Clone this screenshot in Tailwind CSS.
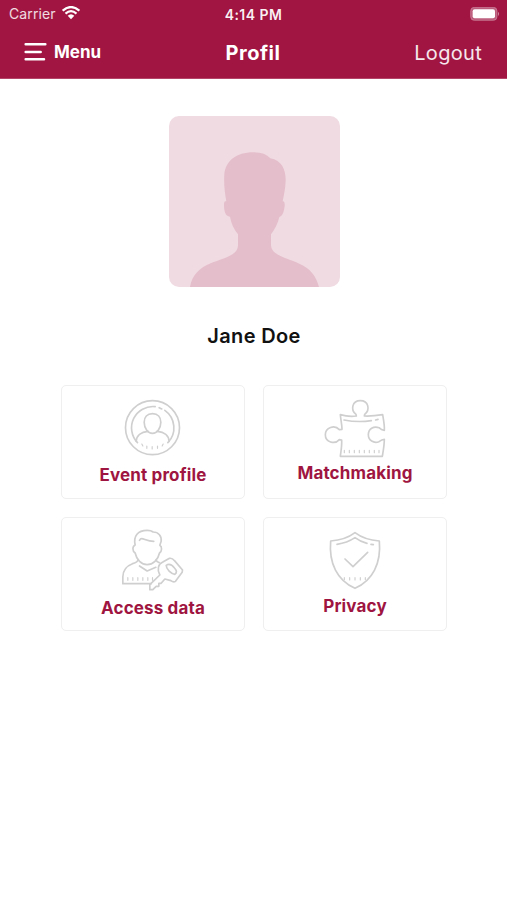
<!DOCTYPE html>
<html lang="en">

<head>
  <meta charset="UTF-8" />
  <meta name="viewport" content="width=device-width, initial-scale=1.0" />
  <title>Profil</title>
  <script src="https://cdn.jsdelivr.net/npm/@tailwindcss/browser@4"></script>
</head>

<body class="bg-white min-h-screen flex flex-col font-['Inter',sans-serif]">
  <header class="bg-[#a01541] h-[79px] text-white border-b border-[#b44468]">
    <!-- Status bar -->
    <div class="h-7 pl-[9px] pr-[7px] grid grid-cols-3 items-center text-[14px] leading-none">
      <div class="flex items-center gap-[6px] text-white/85">
        <span class="tracking-[0.1px]">Carrier</span>
        <svg class="w-[18px] h-[14px] -mt-[2px]" viewBox="0 0 54 42" fill="none" stroke="#fff" stroke-width="6.5">
          <path d="M2 14 Q27 -8 52 14" />
          <path d="M10.500 23 Q27 8 43.500 23" />
          <path d="M17 29 Q27 20 37 29 L27 40 Z" fill="#fff" stroke="none" />
        </svg>
      </div>
      <div class="-ml-[2px] pt-[1px] text-center font-semibold text-[14px] text-white/95 tracking-[0.45px]">4:14 PM</div>
      <svg class="w-[30px] h-[14px] -mt-[1px] justify-self-end" viewBox="0 0 90 42">
        <rect x="2" y="1" width="79" height="39" rx="11" fill="#bd5d7d" stroke="#cf8ba2" stroke-width="2" />
        <rect x="8" y="7" width="67" height="27" rx="6" fill="#fff" />
        <path d="M84 14 Q90 20 84 27 Z" fill="#cf8ba2" />
      </svg>
    </div>

    <!-- Nav bar -->
    <nav class="h-[49px] pl-6 pr-[25px] grid grid-cols-3 items-center">
      <a href="#" class="flex items-center gap-[7px] font-bold text-[17px]">
        <svg class="w-[23px] h-[20px] -mt-[1px]" viewBox="0 0 69 60" fill="none" stroke="#fff" stroke-width="7.500" stroke-linecap="round">
          <path d="M5 7H64M5 30H50M5 52H60" />
        </svg>
        <span>Menu</span>
      </a>
      <h1 class="text-center font-bold text-[20px] tracking-[0.5px]">Profil</h1>
      <a href="#" class="text-right text-[20px] text-white/90 tracking-[0.3px]">Logout</a>
    </nav>
  </header>

  <main class="flex flex-col items-center pt-[37px] pl-px">
    <!-- Avatar -->
    <svg class="w-[171px] h-[171px] rounded-[10px] bg-[#f0dbe2]" viewBox="25 33 513 513">
      <path fill="#e4becb" d="M88 546 C94 510 118 488 150 475 C190 458 232 452 232 420 V388 C220 374 211 354 208 335 C194 334 190 318 190 300 C190 290 192 287 197 289 C192 262 189 235 191 208 C195 168 226 142 278 142 C302 142 318 148 329 160 C364 166 376 196 375 228 C374 250 370 270 366 289 C373 288 373 300 371 310 C368 326 364 334 356 336 C352 354 343 372 331 388 V420 C331 450 376 458 416 476 C450 490 468 516 475 546 Z" />
    </svg>

    <h2 class="mt-[34px] text-[20px] leading-[30px] font-semibold text-[#111] tracking-[0.35px]">Jane Doe</h2>

    <div class="mt-[34px] grid grid-cols-2 gap-[18px]">
      <a href="#" class="w-[184px] h-[114px] rounded-[5px] border border-[#efefef] flex flex-col items-center pt-[4px]">
        <svg class="w-[80px] h-[75px] shrink-0" viewBox="-4.500 0 240 225" fill="none" stroke="#cfcfcf" stroke-width="5" stroke-linecap="round" stroke-linejoin="round">
          <circle cx="114" cy="113" r="81" />
          <path d="M69 158 A64 64 0 0 1 122 50M134 53L142 57M151 61A64 64 0 0 1 160 158" />
          <path d="M114 71C98 71 89 82 89 97C89 114 100 130 114 130C128 130 139 114 139 97C139 82 130 71 114 71Z" />
          <path d="M65 154C66 137 80 126 100 124M129 124C149 126 163 137 164 154" />
          <path stroke-width="3.500" d="M82 162L85 168M97 168V175M113 170V177M129 168V175M146 162L143 168" />
        </svg>
        <span class="text-[17px] leading-5 font-bold text-[#9f1541] tracking-[0.15px]">Event profile</span>
      </a>

      <a href="#" class="w-[184px] h-[114px] rounded-[5px] border border-[#efefef] flex flex-col items-center pt-[4px]">
        <svg class="w-[80px] h-[75px] shrink-0" viewBox="0 0 240 225" fill="none" stroke="#cfcfcf" stroke-width="5" stroke-linecap="round" stroke-linejoin="round">
          <path d="M76 74C90 78 108 80 124 78L123 73C106 60 111 32 136 32C161 32 166 60 149 73L148 78C166 79 184 77 203 74C206 91 209 106 208 121C200 120 196 117 192 113C176 107 160 117 160 134C160 151 176 161 192 155C197 151 201 148 208 148C208 166 205 182 202 199H76C78 183 81 167 80 150L73 149C59 165 31 156 31 134C31 112 59 103 73 119L81 118C81 104 77 88 76 74Z" />
          <path d="M87 90Q128 98 169 92M182 90L189 88" />
          <path stroke-width="3.500" d="M88 181V188M103 181V188M118 181V188M133 181V188M148 181V188M163 181V188M178 181V188M192 181V188" />
        </svg>
        <span class="-mt-[2px] text-[17px] leading-5 font-bold text-[#9f1541] tracking-[0.15px]">Matchmaking</span>
      </a>

      <a href="#" class="w-[184px] h-[114px] rounded-[5px] border border-[#efefef] flex flex-col items-center pt-[2px]">
        <svg class="w-[80px] h-[80px] shrink-0" viewBox="-4.500 0 240 240" fill="none" stroke="#cfcfcf" stroke-width="5" stroke-linecap="round" stroke-linejoin="round">
          <path d="M62 75C56 49 69 31 98 31C106 31 111 32 116 36C132 36 142 48 140 64L136 76C143 80 143 94 135 99C131 119 115 134 98 134C81 134 66 119 62 99C53 93 53 79 62 75Z" />
          <path d="M75 61C82 48 91 64 118 64" />
          <path d="M70 120C70 126 64 128 54 131C35 138 25 151 25 171V191H110M75 138L98 153L124 142M125 120C126 125 130 127 134 128" />
          <path d="M106 209V194L136 165C127 148 131 132 145 126L165 115C171 114 176 117 180 122L204 150L203 157L183 184C179 187 174 186 169 182L151 177L140 190H133V199H125L115 209Z" />
          <path d="M155 136C163 131 173 135 180 144C187 152 188 158 181 163C170 161 155 148 155 136Z" />
          <path stroke-width="3.500" d="M40 173V181M55 173V181M70 173V181M85 173V181M100 173V181M114 173V181" />
        </svg>
        <span class="-mt-[2px] text-[17px] leading-5 font-bold text-[#9f1541] tracking-[0.15px]">Access data</span>
      </a>

      <a href="#" class="w-[184px] h-[114px] rounded-[5px] border border-[#efefef] flex flex-col items-center pt-[2px]">
        <svg class="w-[80px] h-[80px] shrink-0" viewBox="0 0 240 240" fill="none" stroke="#cfcfcf" stroke-width="5" stroke-linecap="round" stroke-linejoin="round">
          <path d="M120 38C103 51 76 61 47 63C41 130 67 182 120 205C173 182 199 130 193 63C164 61 137 51 120 38Z" />
          <path d="M66 73C88 70 105 63 120 53C132 62 142 67 156 70M168 73L175 74" />
          <path d="M90 117L114 140L158 97" />
          <path stroke-width="3.500" d="M88 173V179M104 173V180M120 173V180M136 173V180M151 173V179" />
        </svg>
        <span class="-mt-[4px] text-[17px] leading-5 font-bold text-[#9f1541] tracking-[0.15px]">Privacy</span>
      </a>
    </div>
  </main>
</body>
</html>
